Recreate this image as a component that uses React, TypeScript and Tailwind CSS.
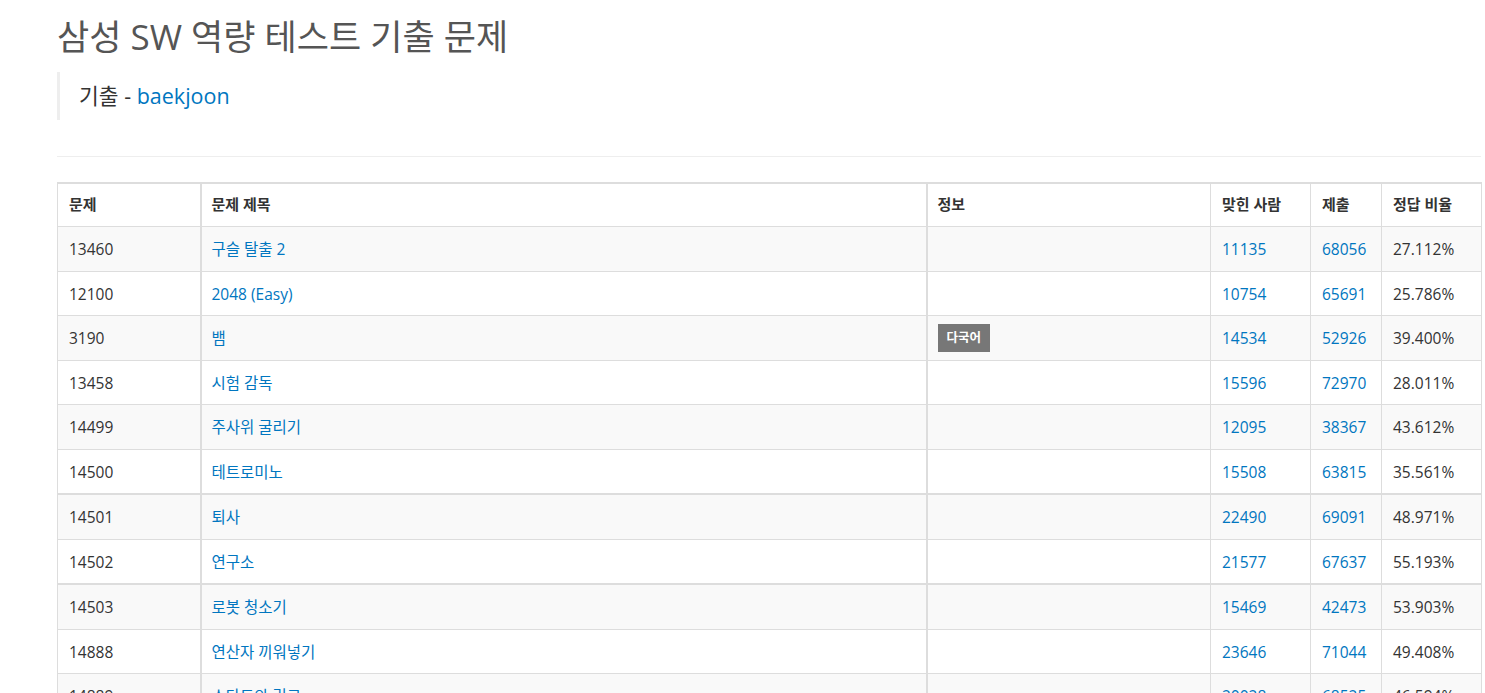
import React from 'react';

type Row = {
  id: string;
  title: string;
  info?: string;
  solved: string;
  submit: string;
  ratio: string;
  thick?: boolean;
};

const rows: Row[] = [
  { id: '13460', title: '구슬 탈출 2', solved: '11135', submit: '68056', ratio: '27.112%' },
  { id: '12100', title: '2048 (Easy)', solved: '10754', submit: '65691', ratio: '25.786%' },
  { id: '3190', title: '뱀', info: '다국어', solved: '14534', submit: '52926', ratio: '39.400%' },
  { id: '13458', title: '시험 감독', solved: '15596', submit: '72970', ratio: '28.011%' },
  { id: '14499', title: '주사위 굴리기', solved: '12095', submit: '38367', ratio: '43.612%' },
  { id: '14500', title: '테트로미노', solved: '15508', submit: '63815', ratio: '35.561%' },
  { id: '14501', title: '퇴사', solved: '22490', submit: '69091', ratio: '48.971%', thick: true },
  { id: '14502', title: '연구소', solved: '21577', submit: '67637', ratio: '55.193%' },
  { id: '14503', title: '로봇 청소기', solved: '15469', submit: '42473', ratio: '53.903%', thick: true },
  { id: '14888', title: '연산자 끼워넣기', solved: '23646', submit: '71044', ratio: '49.408%' },
  { id: '14889', title: '스타트와 링크', solved: '20028', submit: '68525', ratio: '46.594%' },
];

const head = 'border border-[#ddd] px-[11px] pt-[10px] pb-[11px] align-top';
const cell = 'border border-[#ddd] px-[11px] pt-[11px] pb-[9px] align-top';
const wide = 'border-l-2 pl-[10px]';
const link = 'text-[#0076c0]';

export default function App() {
  return (
    <div className="min-h-screen w-full bg-white text-[#333] font-['Open_Sans','Noto_Sans_CJK_KR',sans-serif]">
      <div className="ml-[57px] w-[1424px] pt-[16px]">
        <h1 className="text-[35px] leading-[42px] text-[#555] font-normal">
          삼성 SW 역량 테스트 기출 문제
        </h1>

        <blockquote className="mt-[14px] border-l-[3px] border-[#eee] pl-[19px] py-[10px] text-[21.5px] leading-[28px]">
          기출 - <a className={link}>baekjoon</a>
        </blockquote>

        <hr className="mt-[36px] border-0 border-t border-[#eee]" />

        <table className="mt-[25px] w-[1424px] border-collapse border-t-2 border-[#ddd] text-[15.5px] table-fixed">
          <colgroup>
            <col className="w-[143px]" />
            <col className="w-[726px]" />
            <col className="w-[284px]" />
            <col className="w-[100px]" />
            <col className="w-[71px]" />
            <col className="w-[100px]" />
          </colgroup>
          <thead>
            <tr className="text-left font-bold text-[15px] leading-[21px]">
              <th className={`${head} border-t-2`}>문제</th>
              <th className={`${head} ${wide} border-t-2`}>문제 제목</th>
              <th className={`${head} ${wide} border-t-2`}>정보</th>
              <th className={`${head} border-t-2`}>맞힌 사람</th>
              <th className={`${head} border-t-2`}>제출</th>
              <th className={`${head} border-t-2`}>정답 비율</th>
            </tr>
          </thead>
          <tbody className="leading-[23.5px]">
            {rows.map((r, i) => (
              <tr key={r.id} className={i % 2 === 0 ? 'bg-[#f9f9f9]' : 'bg-white'}>
                <td className={`${cell} ${r.thick ? 'border-t-2' : ''}`}>{r.id}</td>
                <td className={`${cell} ${wide} ${r.thick ? 'border-t-2' : ''}`}>
                  <a className={link}>{r.title}</a>
                </td>
                <td className={`${cell} ${wide} ${r.thick ? 'border-t-2' : ''}`}>
                  {r.info && (
                    <span className="inline-block align-top -my-[3px] bg-[#777] text-white text-[12.5px] font-bold leading-[16px] px-[9px] py-[6px]">
                      {r.info}
                    </span>
                  )}
                </td>
                <td className={`${cell} ${r.thick ? 'border-t-2' : ''}`}>
                  <a className={link}>{r.solved}</a>
                </td>
                <td className={`${cell} ${r.thick ? 'border-t-2' : ''}`}>
                  <a className={link}>{r.submit}</a>
                </td>
                <td className={`${cell} ${r.thick ? 'border-t-2' : ''}`}>{r.ratio}</td>
              </tr>
            ))}
          </tbody>
        </table>
      </div>
    </div>
  );
}
